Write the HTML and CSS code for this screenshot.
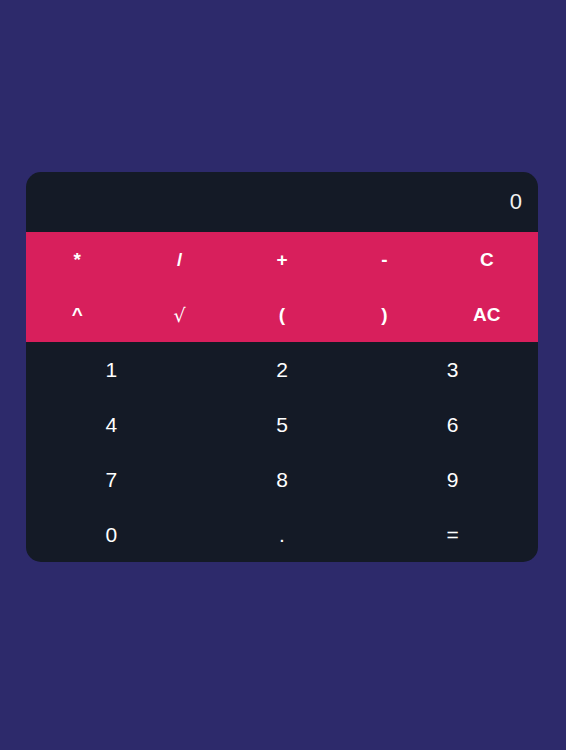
FILE: index.html
```html
<!DOCTYPE html>
<html>
<head>
<meta charset="utf-8">
<link rel="stylesheet" href="styles.css">
</head>
<body>
<div class="page">
  <div class="calc">
    <div class="display">0</div>
    <div class="ops">
      <div class="key">*</div>
      <div class="key">/</div>
      <div class="key">+</div>
      <div class="key">-</div>
      <div class="key">C</div>
      <div class="key">^</div>
      <div class="key sqrt">√</div>
      <div class="key">(</div>
      <div class="key">)</div>
      <div class="key">AC</div>
    </div>
    <div class="nums">
      <div class="key">1</div>
      <div class="key">2</div>
      <div class="key">3</div>
      <div class="key">4</div>
      <div class="key">5</div>
      <div class="key">6</div>
      <div class="key">7</div>
      <div class="key">8</div>
      <div class="key">9</div>
      <div class="key">0</div>
      <div class="key">.</div>
      <div class="key">=</div>
    </div>
  </div>
</div>
</body>
</html>
```
FILE: styles.css
```css
html, body {
  margin: 0;
  padding: 0;
  background: #2d2a6b;
  font-family: "Liberation Sans", Arial, sans-serif;
}
.page {
  height: 750px;
  box-sizing: border-box;
  padding: 172px 28px 0 26px;
}
.calc {
  width: 512px;
  background: #141a26;
  border-radius: 15px;
  overflow: hidden;
  color: #fff;
}
.display {
  height: 60px;
  display: flex;
  align-items: center;
  justify-content: flex-end;
  padding-right: 16px;
  font-size: 22px;
  color: #f2f2f2;
}
.ops {
  background: #d81f5c;
  display: grid;
  grid-template-columns: repeat(5, 1fr);
  grid-auto-rows: 55px;
  font-weight: bold;
  font-size: 19px;
}
.nums {
  display: grid;
  grid-template-columns: repeat(3, 1fr);
  grid-auto-rows: 55px;
  font-size: 21px;
}
.key {
  display: flex;
  align-items: center;
  justify-content: center;
}
.sqrt {
  font-family: "DejaVu Serif", "Liberation Serif", serif;
  font-weight: normal;
}
```
